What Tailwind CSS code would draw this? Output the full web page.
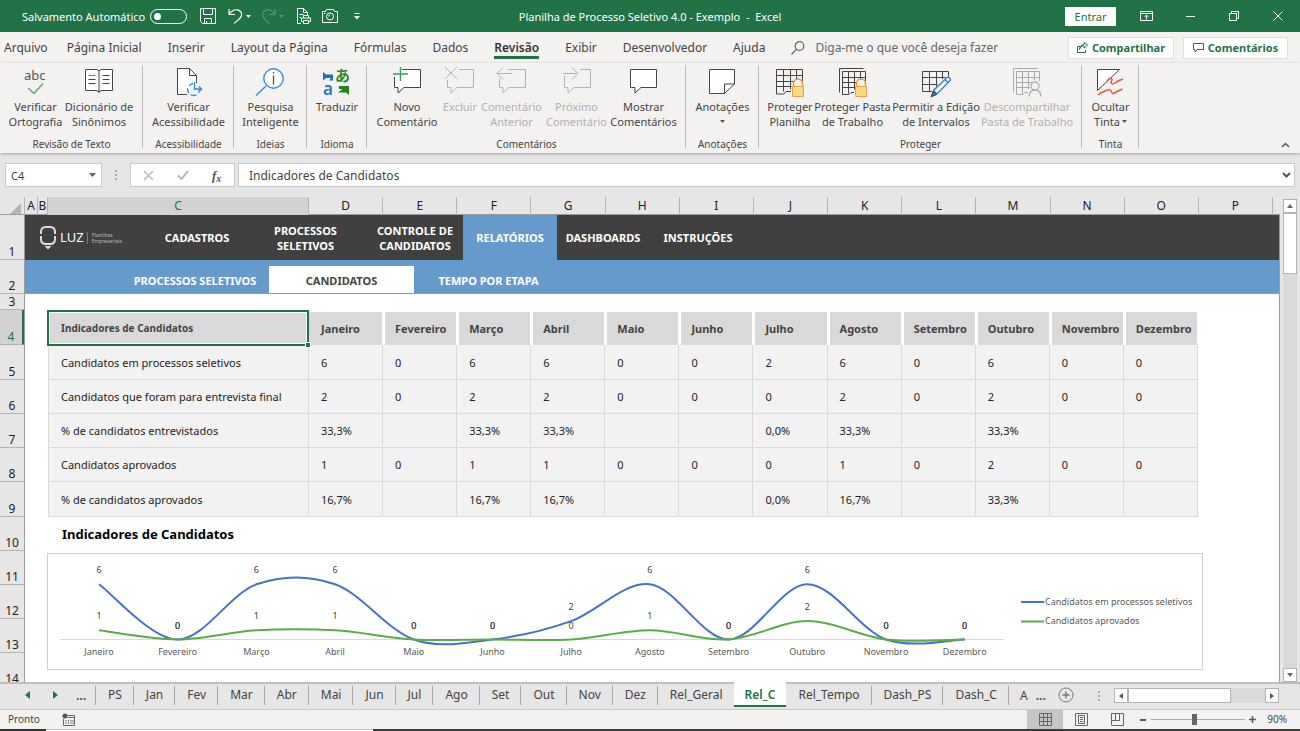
<!DOCTYPE html>
<html lang="pt-BR">
<head>
  <meta charset="UTF-8" />
  <meta name="viewport" content="width=device-width, initial-scale=1.0"/>
  <title>Planilha de Processo Seletivo 4.0 - Exemplo - Excel</title>
  <script src="https://cdn.jsdelivr.net/npm/@tailwindcss/browser@4"></script>
</head>
<body class="min-h-screen flex flex-col bg-[#e6e6e6] font-['Noto_Sans','Open_Sans',sans-serif] text-[11px] leading-[15px] text-[#444] overflow-x-hidden">

  <!-- Title bar -->
  <header class="h-8 shrink-0 bg-[#217346] text-white grid grid-cols-[1fr_auto_1fr] items-center">
    <div class="flex items-center pl-[22px]">
      <label for="autosave">Salvamento Automático</label>
      <span class="relative ml-[5px] w-[37px] h-[15px] shrink-0">
        <input id="autosave" type="checkbox" class="peer appearance-none block w-full h-full rounded-full border border-white" />
        <span class="absolute left-[4px] top-[4px] w-[7px] h-[7px] rounded-full bg-white pointer-events-none"></span>
      </span>
      <button aria-label="Salvar" class="ml-[13px]"><svg class="w-4 h-4" viewBox="0 0 16 16" fill="none" stroke="white"><path d="M.5.5h15v15h-13l-2-2zM3.500.5v6h9v-6M4.500 15.500v-5h7v5M6.500 13v2.500"/></svg></button>
      <button aria-label="Desfazer" class="ml-3"><svg class="w-4 h-4" viewBox="0 0 16 16" fill="none" stroke="white" stroke-width="1.200"><path d="M1 1v5.500h6M1.300 6C4 2.500 7 1.500 9.500 1.800c3 .4 5 3.500 3.800 6.500-1 2.500-3.800 4-7 7.200"/></svg></button>
      <svg class="ml-[2px] w-[5px] h-[3px]" viewBox="0 0 5 3" fill="white"><path d="M0 0h5L2.500 3z"/></svg>
      <button disabled aria-label="Refazer" class="ml-[10px] opacity-25"><svg class="w-4 h-4" viewBox="0 0 16 16" fill="none" stroke="white" stroke-width="1.200"><path d="M14 1v5.500H8M13.700 6C11 2.500 8 1.500 6 1.800c-3.500.6-5.200 3.500-4 6.500.8 2.500 3 4 6 7.200"/></svg></button>
      <svg class="ml-[2px] w-[5px] h-[3px] opacity-25" viewBox="0 0 5 3" fill="white"><path d="M0 0h5L2.500 3z"/></svg>
      <button aria-label="Visualizar impressão" class="ml-3"><svg class="w-4 h-4" viewBox="0 0 16 16" fill="none" stroke="white"><path d="M5 15.500H1.500V.5h6l4 4V7M7.500.5v4h4M3.500 6.500h4M3.500 9.500h1.500M7.500 10V7.500h5V10M7.500 13.500h-2V10h9v3.500h-2M7.500 12.500h5v3h-5z"/></svg></button>
      <button aria-label="Câmera" class="ml-[10px]"><svg class="w-4 h-4" viewBox="0 0 16 16" fill="none" stroke="white"><path d="M.5 3.500h3l1-2h7l1 2h3v11H.5z"/><circle cx="8" cy="8.500" r="3.500"/><path d="M2 5.500h1.500M6.500 8.500A1.500 1.500 0 0 1 8 7"/></svg></button>
      <button aria-label="Personalizar" class="ml-4"><svg class="w-[6px] h-[7px]" viewBox="0 0 6 7" fill="white"><path d="M.5 0h5v1h-5zM0 3h6L3 6.500z"/></svg></button>
    </div>
    <h1 class="whitespace-pre">Planilha de Processo Seletivo 4.0 - Exemplo  -  Excel</h1>
    <div class="flex items-center justify-end pr-[17px]">
      <button class="w-[51px] h-[19px] bg-white text-[#217346]">Entrar</button>
      <button aria-label="Opções da faixa" class="ml-6"><svg class="w-[13px] h-[10px]" viewBox="0 0 13 10" fill="none" stroke="white"><path d="M.5.5h12v9H.5zM.5 2.500h12M6.500 8.500V4.500M4.500 6l2-2 2 2"/></svg></button>
      <button aria-label="Minimizar" class="ml-[33px]"><svg class="w-[10px] h-[10px]" viewBox="0 0 10 10" stroke="white"><path d="M0 5.500h9"/></svg></button>
      <button aria-label="Restaurar" class="ml-[33px]"><svg class="w-[10px] h-[10px]" viewBox="0 0 10 10" fill="none" stroke="white"><path d="M.5 2.500h7v7h-7zM2.500 2V.5h7v7H8"/></svg></button>
      <button aria-label="Fechar" class="ml-[34px]"><svg class="w-[10px] h-[10px]" viewBox="0 0 10 10" stroke="white"><path d="M.5.5l9 9M9.500.5l-9 9"/></svg></button>
    </div>
  </header>

  <!-- Ribbon tabs -->
  <nav class="h-[31px] shrink-0 bg-[#f3f2f1] flex items-center pl-1 pr-3 text-[12px] whitespace-nowrap">
    <div class="flex gap-[26px]">
      <a href="#" class="-mr-[7px]">Arquivo</a>
      <a href="#">Página Inicial</a>
      <a href="#">Inserir</a>
      <a href="#">Layout da Página</a>
      <a href="#">Fórmulas</a>
      <a href="#">Dados</a>
      <a href="#" class="relative font-semibold text-[#333] after:absolute after:inset-x-0 after:-bottom-[4px] after:h-[3px] after:bg-[#217346]">Revisão</a>
      <a href="#">Exibir</a>
      <a href="#">Desenvolvedor</a>
      <a href="#">Ajuda</a>
    </div>
    <label class="ml-[26px] flex items-center gap-[10px]">
      <svg class="w-[14px] h-[14px]" viewBox="0 0 14 14" fill="none" stroke="#666" stroke-width="1.200"><circle cx="8.500" cy="5" r="4.300"/><path d="M5.500 8.200L.5 13.500"/></svg>
      <input type="text" placeholder="Diga-me o que você deseja fazer" class="w-[200px] bg-transparent placeholder:text-[#666]" />
    </label>
    <div class="ml-auto flex gap-[9px] text-[11px] font-bold text-[#217346]">
      <button class="h-[22px] w-[106px] bg-white border border-[#e1dfdd] flex items-center justify-center gap-1"><svg class="w-[11px] h-[11px]" viewBox="0 0 11 11" fill="none" stroke="#217346"><path d="M3 4.500H.5v6h8V8M2.500 7.500C3 5 4.500 3.800 7 3.800V6l3.500-3L7 .5v2C4 2.800 2.500 5 2.500 7.500z"/></svg>Compartilhar</button>
      <button class="h-[22px] w-[105px] bg-white border border-[#e1dfdd] flex items-center justify-center gap-1"><svg class="w-[11px] h-[11px]" viewBox="0 0 11 11" fill="none" stroke="#217346"><path d="M.5 1.500h10v6h-6l-2.500 2.500V7.500H.5z"/></svg>Comentários</button>
    </div>
  </nav>

  <!-- Ribbon -->
  <section class="h-[90px] shrink-0 bg-[#f3f2f1] pt-[2px] flex text-center whitespace-nowrap shadow-[0_1px_3px_#0000004d] relative">
    <div class="w-[143px] relative pt-px flex flex-col">
      <div class="flex pl-1">
        <button class="w-[63px] flex flex-col items-center">
          <svg class="w-8 h-8 mb-px" viewBox="0 0 32 32" fill="none"><text x="4" y="14" font-size="13" fill="#555">abc</text><path d="M8 22l6 5.500 9-10" stroke="#5aa57c" stroke-width="1.500"/></svg>
          <span>Verificar<br>Ortografia</span></button>
        <button class="w-16 flex flex-col items-center">
          <svg class="w-8 h-8 mb-px" viewBox="0 0 32 32" fill="white" stroke="#444"><path d="M2.500 3.500h10.500q2.500 0 3 1.500.5-1.500 3-1.500h10.500v21H19q-2.500 0-3 2-.5-2-3-2H2.500zM16 5v21"/><path d="M19.500 9.500h7M19.500 13.500h7M19.500 17.500h7M5.500 13.500h7M5.500 17.500h7"/><path d="M5.500 9.500h7" stroke="#e0604c"/></svg>
          <span>Dicionário de<br>Sinônimos</span></button>
      </div>
      <span class="mt-auto text-[10px] pb-px">Revisão de Texto</span>
      <i class="absolute right-0 top-0 h-[83px] w-px bg-[#bcbab8]"></i>
    </div>
    <div class="w-[91px] relative pt-px flex flex-col items-center">
      <button class="flex flex-col items-center">
        <svg class="w-8 h-8 mb-px" viewBox="0 0 32 32" fill="none" stroke="#444"><path d="M15 28.500H5.500v-26h12l7 7V17" fill="white"/><path d="M17.500 2.500v7h7"/><path d="M21 17.500a6 6 0 0 0-4 2.500M15.500 22a6 6 0 0 0 1.500 5M18.500 28.500a6 6 0 0 0 6 .2M26.500 27a6 6 0 0 0 1-4M22.500 16v7h7M27 20.500l2.500 2.500-2.500 2.500" stroke="#2f8ad8" stroke-width="1.300"/></svg>
        <span>Verificar<br>Acessibilidade</span></button>
      <span class="mt-auto text-[10px] pb-px">Acessibilidade</span>
      <i class="absolute right-0 top-0 h-[83px] w-px bg-[#bcbab8]"></i>
    </div>
    <div class="w-[73px] relative pt-px flex flex-col items-center">
      <button class="flex flex-col items-center">
        <svg class="w-8 h-8 mb-px" viewBox="0 0 32 32" fill="none"><path d="M12 20L2 29.500" stroke="#3a8ddb" stroke-width="1.500"/><circle cx="19.500" cy="12.500" r="9.700" fill="white" stroke="#3a8ddb" stroke-width="1.400"/><path d="M19.500 9.500v9M19.500 6v1.500" stroke="#444" stroke-width="1.200"/></svg>
        <span>Pesquisa<br>Inteligente</span></button>
      <span class="mt-auto text-[10px] pb-px">Ideias</span>
      <i class="absolute right-0 top-0 h-[83px] w-px bg-[#bcbab8]"></i>
    </div>
    <div class="w-[60px] relative pt-px flex flex-col items-center">
      <button class="flex flex-col items-center">
        <svg class="w-8 h-8 mb-px overflow-visible" viewBox="0 0 32 32"><path d="M2 6l3 2.500h7v6H8l2-2.500H5l-3 2.500z" fill="#1e6fbf"/><text x="2" y="29" font-size="17" font-weight="600" fill="#2579c9">a</text><text x="14" y="15" font-size="15" font-weight="bold" font-family="Noto Sans CJK JP, sans-serif" fill="#2b8a2b">あ</text><path d="M18 20h10v9l-3-2.500h-8l4.500-3.500h-3.500z" fill="#1c861c"/></svg>
        <span>Traduzir</span></button>
      <span class="mt-auto text-[10px] pb-px">Idioma</span>
      <i class="absolute right-0 top-0 h-[83px] w-px bg-[#bcbab8]"></i>
    </div>
    <div class="w-[319px] relative pt-px flex flex-col">
      <div class="flex pl-[5px]">
        <button class="w-[70px] flex flex-col items-center">
          <svg class="w-8 h-8 mb-px" viewBox="0 0 32 32" fill="none"><path d="M11 3.500h18.500v18H13l-6 5.500v-5.500H3.500V11" fill="white" stroke="#444"/><path d="M9.500 1v14M2 8h15" stroke="#3c9a5c" stroke-width="1.500"/></svg>
          <span>Novo<br>Comentário</span></button>
        <button disabled class="w-9 flex flex-col items-center text-[#b1afad]">
          <svg class="w-8 h-8 mb-px" viewBox="0 0 32 32" fill="none" stroke="#b5b3b1"><path d="M15 3.500h14.500v18H13l-6 5.500v-5.500H3.500V14M1 1l12 12M13 1L1 13"/></svg>
          <span>Excluir</span></button>
        <button disabled class="w-[67px] flex flex-col items-center text-[#b1afad]">
          <svg class="w-8 h-8 mb-px" viewBox="0 0 32 32" fill="none" stroke="#b5b3b1"><path d="M12 3.500h17.500v18H13l-6 5.500v-5.500H3.500V13M1 7.500h15M7 1.500l-6 6 6 6"/></svg>
          <span>Comentário<br>Anterior</span></button>
        <button disabled class="w-[63px] flex flex-col items-center text-[#b1afad]">
          <svg class="w-8 h-8 mb-px" viewBox="0 0 32 32" fill="none" stroke="#b5b3b1"><path d="M19 3.500h10.500v18H13l-6 5.500v-5.500H3.500V10M2 7.500h14M11 1.500l6 6-6 6"/></svg>
          <span>Próximo<br>Comentário</span></button>
        <button class="w-[71px] flex flex-col items-center">
          <svg class="w-8 h-8 mb-px" viewBox="0 0 32 32" fill="white" stroke="#444"><path d="M2.500 3.500h26v18H13l-6 5.500v-5.500H2.500z"/></svg>
          <span>Mostrar<br>Comentários</span></button>
      </div>
      <span class="mt-auto text-[10px] pb-px">Comentários</span>
      <i class="absolute right-0 top-0 h-[83px] w-px bg-[#bcbab8]"></i>
    </div>
    <div class="w-[73px] relative pt-px flex flex-col items-center">
      <button class="flex flex-col items-center">
        <svg class="w-8 h-8 mb-px" viewBox="0 0 32 32" fill="white" stroke="#444"><path d="M3.500 3.500h25V18l-10 9.500h-15zM18.500 27.500V18h10"/></svg>
        <span>Anotações</span>
        <svg class="mt-[6px] w-[5px] h-[3px]" viewBox="0 0 5 3" fill="#555"><path d="M0 0h5L2.500 3z"/></svg></button>
      <span class="mt-auto text-[10px] pb-px">Anotações</span>
      <i class="absolute right-0 top-0 h-[83px] w-px bg-[#bcbab8]"></i>
    </div>
    <div class="w-[323px] relative pt-px flex flex-col">
      <div class="flex pl-[6px]">
        <button class="w-[50px] flex flex-col items-center">
          <svg class="w-8 h-8 mb-px" viewBox="0 0 32 32" fill="none" stroke="#444"><path d="M17 25.500h-5l-2 2.500H2.500V3.500h26V15M2.500 9.500h26M2.500 15.500h20M2.500 20.500h15M9.500 3.500v22M16.500 3.500v20M22.500 3.500V14"/><path d="M19.500 21v-3.500a4.500 4.500 0 0 1 9 0V21" stroke="#e8913a" stroke-width="1.400" fill="#f3f2f1"/><path d="M18.500 20.500h11v10h-11z" fill="#fbd87f" stroke="#e8a24a"/></svg>
          <span>Proteger<br>Planilha</span></button>
        <button class="w-[75px] flex flex-col items-center">
          <svg class="w-8 h-8 mb-px" viewBox="0 0 32 32" fill="none" stroke="#444"><path d="M2.500 26.500v-24h24"/><path d="M17 26.500h-3l-2 2H5.500V5.500h23V15M5.500 11.500h23M5.500 16.500h17M5.500 21.500h13M11.500 5.500v22M17.500 5.500v18M23.500 5.500V14"/><path d="M19.500 21v-3.500a4.500 4.500 0 0 1 9 0V21" stroke="#e8913a" stroke-width="1.400" fill="#f3f2f1"/><path d="M18.500 20.500h11v10h-11z" fill="#fbd87f" stroke="#e8a24a"/></svg>
          <span>Proteger Pasta<br>de Trabalho</span></button>
        <button class="w-[92px] flex flex-col items-center">
          <svg class="w-8 h-8 mb-px" viewBox="0 0 32 32" fill="none" stroke="#444"><path d="M12 25.500H2.500v-20h26V12M2.500 11.500h23M2.500 18.500h15M9.500 5.500v20M16.500 5.500v15M22.500 5.500V13"/><path d="M11.500 30.500l2-6L27 11.500q3-1 3.500 2.500L17 28zM13.500 24.500l3.500 3.500M25 13.500l3.500 3.500" fill="white" stroke="#2f7fd0" stroke-width="1.400"/><path d="M11.500 30.500l2-5 3 3z" fill="#2f7fd0"/></svg>
          <span>Permitir a Edição<br>de Intervalos</span></button>
        <button disabled class="w-[90px] flex flex-col items-center text-[#b1afad]">
          <svg class="w-8 h-8 mb-px" viewBox="0 0 32 32" fill="none" stroke="#adabaa"><path d="M2.500 26.500v-24h24"/><path d="M17 26.500h-3l-2 2H5.500V5.500h23V15M5.500 11.500h23M5.500 16.500h15M5.500 21.500h13M11.500 5.500v22M17.500 5.500v18M23.500 5.500V14"/><circle cx="24" cy="20" r="4" fill="#f3f2f1" stroke-width="1.300"/><path d="M18 30.500q.5-6.500 6-6.500t6 6.500" fill="#f3f2f1" stroke-width="1.300"/></svg>
          <span>Descompartilhar<br>Pasta de Trabalho</span></button>
      </div>
      <span class="mt-auto text-[10px] pb-px">Proteger</span>
      <i class="absolute right-0 top-0 h-[83px] w-px bg-[#bcbab8]"></i>
    </div>
    <div class="w-[57px] relative pt-px flex flex-col items-center">
      <button class="flex flex-col items-center">
        <svg class="w-8 h-8 mb-px" viewBox="0 0 32 32" fill="none"><path d="M3.500 3.500h22l-22 21z" fill="white" stroke="#444"/><path d="M13 15q4-5 5-1.500l-1 3q1 2.500 4 .5 3-2.500 8-4M4 29q3-2.500 8-4.500 4-2 5.500 1 .5 3 3 1.500 4-2.500 8-4" stroke="#e8553f" stroke-width="1.500"/></svg>
        <span>Ocultar</span>
        <span class="flex items-center gap-[2px]">Tinta<svg class="w-[5px] h-[3px]" viewBox="0 0 5 3" fill="#555"><path d="M0 0h5L2.500 3z"/></svg></span></button>
      <span class="mt-auto text-[10px] pb-px">Tinta</span>
      <i class="absolute right-0 top-0 h-[83px] w-px bg-[#bcbab8]"></i>
    </div>
    <button aria-label="Recolher faixa" class="ml-auto self-end pb-[5px] pr-[10px]"><svg class="w-[9px] h-[6px]" viewBox="0 0 9 6" fill="none" stroke="#555" stroke-width="1.500"><path d="M1 5l3.500-3.500L8 5"/></svg></button>
  </section>

  <!-- Formula bar -->
  <section class="shrink-0 pt-[10px] pb-[10px] pl-[5px] pr-[5px] flex text-[12px]">
    <div class="w-[97px] h-[24px] bg-white border border-[#c8c8c8] flex items-center pl-[5px] pr-[5px]">
      <input aria-label="Caixa de nome" value="C4" class="min-w-0 flex-1 text-[11px]" />
      <button aria-label="Nomes"><svg class="w-[7px] h-[4px]" viewBox="0 0 7 4" fill="#666"><path d="M0 0h7L3.500 4z"/></svg></button>
    </div>
    <svg class="w-7 h-[24px]" viewBox="0 0 28 24" fill="#aaa"><path d="M13 7h2v2h-2zM13 11h2v2h-2zM13 15h2v2h-2z"/></svg>
    <div class="w-[105px] h-[24px] bg-white border border-[#c8c8c8] flex items-center pl-[12px] gap-[23px]">
      <button disabled aria-label="Cancelar"><svg class="w-[11px] h-[11px]" viewBox="0 0 11 11" stroke="#bbb" stroke-width="1.500"><path d="M1 1l9 9M10 1l-9 9"/></svg></button>
      <button disabled aria-label="Inserir"><svg class="w-[12px] h-[10px]" viewBox="0 0 12 10" fill="none" stroke="#bbb" stroke-width="2"><path d="M1 5.500L4.500 9 11 1"/></svg></button>
      <button aria-label="Inserir função" class="font-['Liberation_Serif',serif] italic font-bold text-[13px] text-[#555]">f<sub class="text-[10px]">x</sub></button>
    </div>
    <div class="ml-[3px] flex-1 h-[24px] bg-white border border-[#c8c8c8] flex items-center pl-[10px] pr-[3px]">
      <input aria-label="Barra de fórmulas" value="Indicadores de Candidatos" class="flex-1" />
      <button aria-label="Expandir"><svg class="w-[9px] h-[6px]" viewBox="0 0 9 6" fill="none" stroke="#555" stroke-width="2"><path d="M1 1l3.500 3.500L8 1"/></svg></button>
    </div>
  </section>

  <!-- Worksheet -->
  <main class="flex-1 flex">
    <div class="flex-1 min-w-0 flex flex-col">
      <div id="colHeads" class="h-[18px] shrink-0 border-b border-[#9b9b9b] grid grid-cols-[25px_13px_10px_261px_repeat(13,minmax(0,1fr))_7px] text-[12px] leading-[18px] text-center text-[#222]">
        <div class="border-r border-[#b4b4b4] flex items-end justify-end pb-[3px] pr-[3px]"><svg class="w-[11px] h-[11px]" viewBox="0 0 11 11" fill="#b4b4b4"><path d="M11 0v11H0z"/></svg></div>
      </div>
      <div class="flex-1 flex">
        <div id="rowHeads" class="w-[25px] shrink-0 border-r border-[#9b9b9b] flex flex-col text-[12px] text-center text-[#222]"></div>

        <div class="flex-1 min-w-0 bg-white border-r border-[#9b9b9b]">
          <nav class="h-[45px] bg-[#404040] flex text-white font-bold text-center">
            <div class="w-[125px] flex items-center pl-[15px]">
              <svg class="w-[16px] h-[24px]" viewBox="0 0 16 24" fill="none" stroke="#ddd" stroke-width="2"><path d="M1 8V6Q1 1 6 1h4q5 0 5 5v2M1 10v3q0 5 5 5h4q5 0 5-5v-3"/><path d="M4.500 20h7L8 23.500z" fill="#ddd" stroke="none"/></svg>
              <span class="ml-[4px] text-[13px] font-normal">LUZ</span>
              <span class="ml-[3px] pl-[4px] border-l border-[#777] text-[5px] leading-[6px] text-left font-normal text-[#bbb]">Planilhas<br>Empresariais</span>
            </div>
            <a href="#" class="w-[94px] flex items-center justify-center">CADASTROS</a>
            <a href="#" class="w-[123px] flex items-center justify-center">PROCESSOS<br>SELETIVOS</a>
            <a href="#" class="w-[96px] flex items-center justify-center">CONTROLE DE<br>CANDIDATOS</a>
            <a href="#" class="w-[94px] flex items-center justify-center bg-[#6699cc]">RELATÓRIOS</a>
            <a href="#" class="w-[92px] flex items-center justify-center">DASHBOARDS</a>
            <a href="#" class="w-[98px] flex items-center justify-center">INSTRUÇÕES</a>
          </nav>
          <nav class="h-[34px] bg-[#6699cc] border-b border-[#8f9aa5] pl-24 pt-[6px] flex text-white font-bold">
            <a href="#" class="w-[148px] pt-[2px] flex items-center justify-center">PROCESSOS SELETIVOS</a>
            <a href="#" class="w-[145px] pt-[2px] flex items-center justify-center bg-white text-[#444]">CANDIDATOS</a>
            <a href="#" class="w-[149px] pt-[2px] flex items-center justify-center">TEMPO POR ETAPA</a>
          </nav>

          <div class="pt-4 pl-[23px] pr-[81px]">
            <table class="w-full table-fixed border-separate border-spacing-0 text-left text-[#222]">
              <thead>
                <tr id="tableHead" class="h-[35px]">
                  <th class="relative w-[261px] pl-[13px] pt-[2px] bg-[#d9d9d9] text-[10px] text-[#444]">Indicadores de Candidatos
                    <span class="absolute -left-px right-0 top-0 -bottom-px border-2 border-[#217346] shadow-[inset_0_0_0_1px_#fff]"></span>
                    <span class="absolute -right-[2px] -bottom-[3px] w-[6px] h-[6px] bg-[#217346] border border-white"></span>
                  </th>
                </tr>
              </thead>
              <tbody id="tableBody"></tbody>
            </table>
          </div>

          <h2 class="h-[34px] pl-[37px] leading-[34px] text-[13px] font-bold text-black">Indicadores de Candidatos</h2>

          <div class="mt-[2px] ml-[22px] mr-[76px] border border-[#d0d0d0]">
            <svg id="chart" class="block w-full" viewBox="0 0 1154 115" font-size="9" fill="none">
              <path d="M12 85.500H956" stroke="#d9d9d9"/>
              <path d="M973 48h23" stroke="#4472c4" stroke-width="2"/>
              <text x="997" y="51" fill="#595959">Candidatos em processos seletivos</text>
              <path d="M973 67.500h23" stroke="#5aad46" stroke-width="2"/>
              <text x="997" y="70" fill="#595959">Candidatos aprovados</text>
            </svg>
          </div>
        </div>
      </div>
    </div>

    <!-- Vertical scroll bar -->
    <div class="w-5 shrink-0 flex flex-col items-center pt-[2px]">
      <button aria-label="Rolar para cima" class="w-[14px] h-[14px] bg-white border border-[#b4b4b4] flex items-center justify-center"><svg class="w-[6px] h-[4px]" viewBox="0 0 6 4" fill="#666"><path d="M0 4h6L3 0z"/></svg></button>
      <div class="w-[14px] flex-1 bg-[#d9d9d9]"><div class="h-[61px] bg-white border border-[#b4b4b4]"></div></div>
      <button aria-label="Rolar para baixo" class="w-[14px] h-[14px] bg-white border border-[#b4b4b4] flex items-center justify-center"><svg class="w-[6px] h-[4px]" viewBox="0 0 6 4" fill="#666"><path d="M0 0h6L3 4z"/></svg></button>
    </div>
  </main>

  <!-- Sheet tabs -->
  <nav class="h-[27px] shrink-0 border-t-2 border-[#bdbdbd] flex items-start text-[12px] whitespace-nowrap">
    <div class="w-[95px] h-[22px] shrink-0 flex items-center pl-[25px] text-[#217346]">
      <button aria-label="Planilha anterior"><svg class="w-[5px] h-[8px]" viewBox="0 0 5 8" fill="#217346"><path d="M5 0v8L0 4z"/></svg></button>
      <button aria-label="Próxima planilha" class="ml-[23px]"><svg class="w-[5px] h-[8px]" viewBox="0 0 5 8" fill="#217346"><path d="M0 0v8l5-4z"/></svg></button>
      <button class="ml-[18px] font-bold">...</button>
    </div>
    <div id="sheetTabs" class="flex"></div>
    <span class="h-[22px] flex items-center pl-[11px]">A</span>
    <button class="h-[22px] ml-2 font-bold text-[#217346]">...</button>
    <button aria-label="Nova planilha" class="mt-[3px] ml-3"><svg class="w-[16px] h-[16px]" viewBox="0 0 16 16" fill="none" stroke="#777"><circle cx="8" cy="8" r="7"/><path d="M4.500 8h7M8 4.500v7" stroke-width="1.500"/></svg></button>
    <div class="ml-auto mt-[4px] mr-[21px] flex h-[15px]">
      <svg class="w-4 h-[15px]" viewBox="0 0 16 15" fill="#aaa"><path d="M0 3h2v2H0zM0 7h2v2H0zM0 11h2v2H0z"/></svg>
      <button aria-label="Rolar para a esquerda" class="w-[14px] bg-white border border-[#b4b4b4] flex items-center justify-center"><svg class="w-[4px] h-[6px]" viewBox="0 0 4 6" fill="#555"><path d="M4 0v6L0 3z"/></svg></button>
      <div class="w-[137px] bg-[#d9d9d9]"><div class="w-[103px] h-full bg-white border border-[#b4b4b4]"></div></div>
      <button aria-label="Rolar para a direita" class="w-[14px] bg-white border border-[#b4b4b4] flex items-center justify-center"><svg class="w-[4px] h-[6px]" viewBox="0 0 4 6" fill="#555"><path d="M0 0v6l4-3z"/></svg></button>
    </div>
  </nav>

  <!-- Status bar -->
  <footer class="h-5 shrink-0 bg-[#f3f2f1] border-t border-[#c8c8c8] flex items-center pl-2 pr-[13px] text-[10px]">
    <span>Pronto</span>
    <svg class="ml-[22px] w-[13px] h-[13px]" viewBox="0 0 13 13" fill="none" stroke="#666"><path d="M5 2.500h7.500v10H1.500V6M6 4.500h6.500"/><path d="M4 7v4M6.500 7v4M9 7v4M11 7v4" stroke-dasharray="1.500 .8"/><circle cx="3" cy="3" r="2.500" fill="#555" stroke="none"/></svg>
    <div class="ml-auto flex items-center h-full">
      <button aria-label="Normal" class="w-9 h-full bg-[#c8c6c4] flex items-center justify-center"><svg class="w-[13px] h-[13px]" viewBox="0 0 13 13" fill="none" stroke="#666"><path d="M.5.5h12v12H.5zM.5 4.500h12M.5 8.500h12M4.500.5v12M8.500.5v12"/></svg></button>
      <button aria-label="Layout da página" class="w-9 flex justify-center"><svg class="w-[13px] h-[13px]" viewBox="0 0 13 13" fill="none" stroke="#666"><path d="M.5.5h12v12H.5zM3.500 2.500h6v8h-6zM5 4.500h3M5 6.500h3M5 8.500h3"/></svg></button>
      <button aria-label="Quebra de página" class="w-9 flex justify-center"><svg class="w-[13px] h-[13px]" viewBox="0 0 13 13" fill="none" stroke="#666"><path d="M.5 12V.5h12v12H.5M1 7.500h7.500V.5M4.500.5v7"/></svg></button>
      <button aria-label="Menos zoom" class="ml-[5px]"><svg class="w-[7px] h-[7px]" viewBox="0 0 7 7" stroke="#555" stroke-width="2"><path d="M0 4h6"/></svg></button>
      <input type="range" aria-label="Zoom" min="10" max="180" value="87" class="ml-1 mr-1 w-[94px] h-[11px] appearance-none bg-transparent [&::-webkit-slider-runnable-track]:h-px [&::-webkit-slider-runnable-track]:bg-[#aaa] [&::-webkit-slider-thumb]:appearance-none [&::-webkit-slider-thumb]:w-[5px] [&::-webkit-slider-thumb]:h-[11px] [&::-webkit-slider-thumb]:-mt-[5px] [&::-webkit-slider-thumb]:bg-[#666]" />
      <button aria-label="Mais zoom"><svg class="w-[7px] h-[7px]" viewBox="0 0 7 7" stroke="#555" stroke-width="1.500"><path d="M0 3.500h7M3.500 0v7"/></svg></button>
      <span class="ml-[11px]">90%</span>
    </div>
  </footer>
  <div class="h-[2px] shrink-0 flex">
    <div class="w-[46px] bg-[#333]"></div>
    <div class="w-[327px] bg-white border-t border-[#c8c8c8]"></div>
    <div class="flex-1 bg-[#3a3a3c]"></div>
  </div>

  <script>
    const months = ["Janeiro", "Fevereiro", "Março", "Abril", "Maio", "Junho", "Julho", "Agosto", "Setembro", "Outubro", "Novembro", "Dezembro"];
    const candidates = [6, 0, 6, 6, 0, 0, 2, 6, 0, 6, 0, 0];
    const finalists = [2, 0, 2, 2, 0, 0, 0, 2, 0, 2, 0, 0];
    const approved = [1, 0, 1, 1, 0, 0, 0, 1, 0, 2, 0, 0];

    const percent = (part, i) => candidates[i] ? (part / candidates[i] * 100).toFixed(1).replace(".", ",") + "%" : "";

    const rows = [
      ["Candidatos em processos seletivos", candidates],
      ["Candidatos que foram para entrevista final", finalists],
      ["% de candidatos entrevistados", finalists.map(percent)],
      ["Candidatos aprovados", approved],
      ["% de candidatos aprovados", approved.map(percent)]
    ];

    // Column letters
    const colHeads = document.getElementById("colHeads");
    "ABCDEFGHIJKLMNOP".split("").forEach(letter => {
      const active = letter === "C" ? "bg-[#d2d2d2] text-[#217346] border-b-2 border-b-[#217346]" : "";
      colHeads.innerHTML += `<div class="border-r border-r-[#b4b4b4] ${active}">${letter}</div>`;
    });

    // Row numbers
    const rowHeights = ["h-[45px]", "h-[34px]", "h-[16px]", "h-[35px]", "h-[35px]", "h-[34px]", "h-[34px]", "h-[34px]", "h-[35px]", "h-[34px]", "h-[34px]", "h-[34px]", "h-[34px]"];
    const rowHeads = document.getElementById("rowHeads");
    rowHeights.forEach((height, i) => {
      const active = i === 3 ? "bg-[#d2d2d2] text-[#217346] border-r-2 border-r-[#217346]" : "";
      rowHeads.innerHTML += `<div class="${height} flex items-end justify-center border-b border-b-[#b4b4b4] ${active}">${i + 1}</div>`;
    });
    rowHeads.innerHTML += `<div class="h-[29px] overflow-hidden pt-[18px]">14</div>`;

    // Table
    const tableHead = document.getElementById("tableHead");
    months.forEach((month, i) => {
      const gap = i === 0 ? "pl-3" : "pl-[10px] border-l-2";
      tableHead.innerHTML += `<th class="${gap} bg-[#d9d9d9] border-t-2 border-r border-white text-[#444]">${month}</th>`;
    });
    const tableBody = document.getElementById("tableBody");
    rows.forEach(([label, values], i) => {
      const height = i === 0 || i === 4 ? "h-[35px]" : "h-[34px]";
      const cells = values.map(value => `<td class="pl-3 bg-[#f2f2f2] border-r border-b border-[#d9d9d9]">${value}</td>`).join("");
      tableBody.innerHTML += `<tr class="${height}"><td class="pl-3 bg-[#f2f2f2] border-x border-b border-[#d9d9d9]">${label}</td>${cells}</tr>`;
    });

    // Line chart, smoothed through every month
    const px = i => 51 + i * 78.7;
    const py = value => 85.5 - value * 9.2;
    function smooth(values) {
      const at = i => values[Math.max(0, Math.min(values.length - 1, i))];
      const xAt = i => px(Math.max(0, Math.min(values.length - 1, i)));
      let d = `M${px(0)} ${py(values[0])}`;
      for (let i = 0; i < values.length - 1; i++) {
        const x1 = px(i) + (xAt(i + 1) - xAt(i - 1)) / 6;
        const y1 = py(at(i)) + (py(at(i + 1)) - py(at(i - 1))) / 6;
        const x2 = px(i + 1) - (xAt(i + 2) - xAt(i)) / 6;
        const y2 = py(at(i + 1)) - (py(at(i + 2)) - py(at(i))) / 6;
        d += `C${x1} ${y1} ${x2} ${y2} ${px(i + 1)} ${py(at(i + 1))}`;
      }
      return d;
    }
    const chart = document.getElementById("chart");
    [[candidates, "#4472c4"], [approved, "#5aad46"]].forEach(([values, color]) => {
      chart.innerHTML += `<path d="${smooth(values)}" stroke="${color}" stroke-width="2"/>`;
    });
    [candidates, approved].forEach(values => {
      values.forEach((value, i) => {
        chart.innerHTML += `<text x="${px(i)}" y="${py(value) - 11}" text-anchor="middle" fill="#404040">${value}</text>`;
      });
    });
    months.forEach((month, i) => {
      chart.innerHTML += `<text x="${px(i)}" y="101" text-anchor="middle" fill="#595959">${month}</text>`;
    });

    // Sheet tabs
    const sheets = ["PS", "Jan", "Fev", "Mar", "Abr", "Mai", "Jun", "Jul", "Ago", "Set", "Out", "Nov", "Dez", "Rel_Geral", "Rel_C", "Rel_Tempo", "Dash_PS", "Dash_C"];
    const sheetTabs = document.getElementById("sheetTabs");
    sheets.forEach((sheet, i) => {
      if (sheet === "Rel_C") {
        sheetTabs.innerHTML += `<a href="#" class="-mt-[2px] h-[25px] pt-[3px] px-[11px] leading-[19px] font-semibold text-[#217346] bg-white border-b-2 border-[#217346]">${sheet}</a>`;
      } else {
        const line = i === 0 ? "border-x" : sheets[i + 1] === "Rel_C" ? "" : "border-r";
        sheetTabs.innerHTML += `<a href="#" class="mt-[2px] h-[19px] pl-3 pr-[11px] leading-[18px] border-[#a8a8a8] ${line}">${sheet}</a>`;
      }
    });
  </script>
</body>
</html>
